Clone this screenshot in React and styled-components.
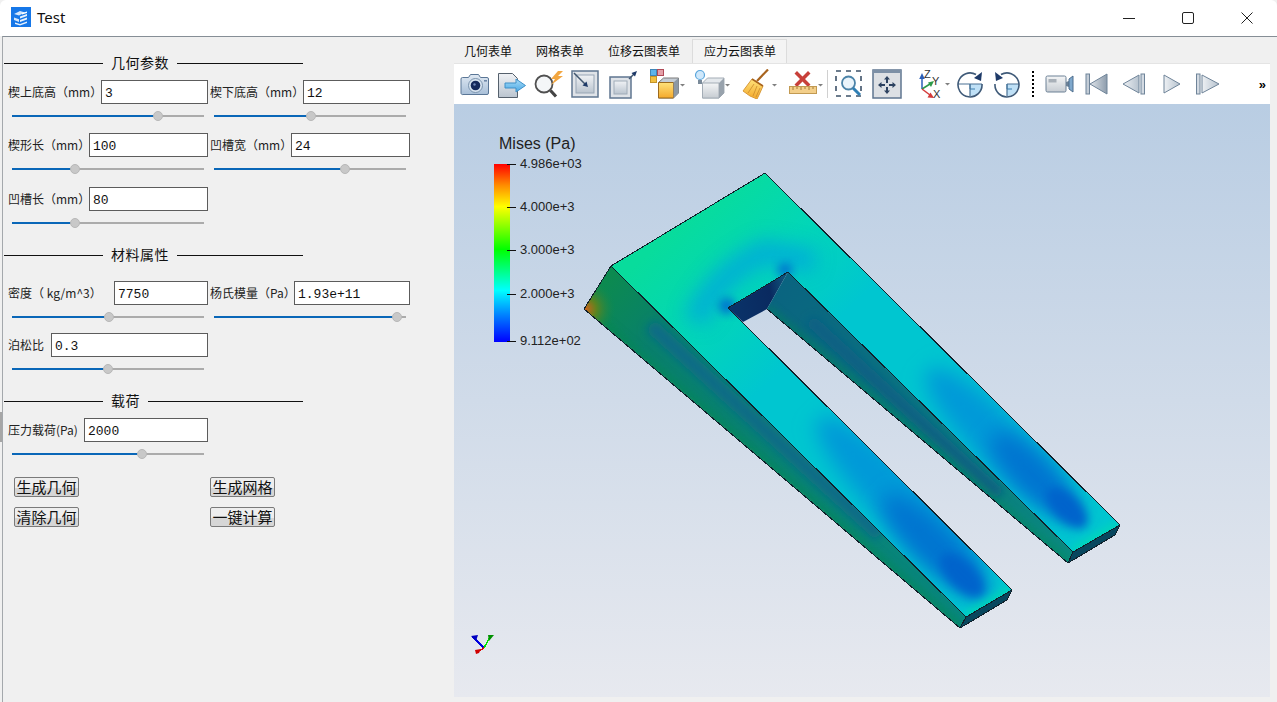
import React from "react";
import styled, { createGlobalStyle } from "styled-components";

const GlobalStyle = createGlobalStyle`
  html, body {
    margin: 0;
    padding: 0;
    background: #f0f0f0;
    overflow: hidden;
  }
  * {
    box-sizing: border-box;
  }
`;

const cjk = `"Noto Sans CJK SC", "Noto Sans", sans-serif`;

const Win = styled.div`
  position: relative;
  width: 1277px;
  height: 702px;
  display: flex;
  flex-direction: column;
  overflow: hidden;
  background: #f0f0f0;
`;

const EdgeMark = styled.div`
  position: absolute;
  left: 0;
  top: 412px;
  width: 2px;
  height: 30px;
  background: #a6a6a6;
`;

const TitleBar = styled.div`
  height: 36px;
  flex: none;
  display: flex;
  align-items: center;
  background: #fff;
  border-top-left-radius: 6px;
  border-top-right-radius: 6px;
  padding: 0 1px 0 11px;
`;

const TitleText = styled.span`
  font: 15px "Noto Sans", sans-serif;
  color: #111;
  margin-left: 6px;
  margin-top: -2px;
  flex: 1;
`;

const AppIconBox = styled.svg`
  display: block;
  margin-top: -2px;
`;

const WinButton = styled.div`
  width: 59px;
  height: 36px;
  display: flex;
  align-items: center;
  justify-content: center;
  margin-top: -1px;
`;

const Main = styled.div`
  flex: 1;
  min-height: 0;
  display: flex;
  margin-left: 2px;
  border-top: 1px solid #868e96;
  border-left: 1px solid #a4a8ac;
`;

const Panel = styled.div`
  width: 451px;
  flex: none;
  padding: 15px 0 0 1px;
`;

const SectionHead = styled.div`
  width: 299px;
  height: 20px;
  display: flex;
  align-items: center;
  gap: 8px;
  margin-bottom: ${(p) => p.$after}px;
  font: 14px/18px ${cjk};
  letter-spacing: 0.5px;
  color: #111;
  &::before,
  &::after {
    content: "";
    height: 1px;
    background: #111;
    position: relative;
    top: 1px;
  }
  &::before {
    width: 99px;
    flex: none;
  }
  &::after {
    flex: 1;
  }
`;

const Rows = styled.div`
  display: grid;
  grid-template-columns: 200px 200px;
  column-gap: 2px;
  padding-left: 4px;
  row-gap: ${(p) => p.$gap}px;
  margin-bottom: 16px;
`;

const Field = styled.div`
  display: flex;
  flex-direction: column;
  margin-top: ${(p) => p.$mt || 0}px;
`;

const FieldTop = styled.div`
  display: flex;
  align-items: center;
  height: 24px;
`;

const Label = styled.label`
  flex: none;
  width: ${(p) => p.$w}px;
  font: 12px ${cjk};
  color: #222;
  white-space: nowrap;
  position: relative;
  top: -1px;
`;

const Input = styled.input`
  flex: 1;
  min-width: 0;
  height: 24px;
  border: 1px solid #5c5c5c;
  background: #fff;
  padding: 2px 3px 0;
  font: 13px "Liberation Mono", monospace;
  color: #111;
  outline: none;
  border-radius: 0;
`;

const Track = styled.div`
  position: relative;
  height: 2px;
  width: 192px;
  margin: 11px 0 4px 4px;
  background: #ababab;
`;

const TrackFill = styled.div`
  height: 100%;
  width: ${(p) => p.$v}%;
  background: #0a67b8;
`;

const Thumb = styled.div`
  position: absolute;
  top: -4px;
  left: ${(p) => p.$v}%;
  width: 10px;
  height: 10px;
  margin-left: -5px;
  border-radius: 50%;
  background: #c8c8c8;
  border: 1px solid #b8b8b8;
`;

const Actions = styled.div`
  display: grid;
  grid-template-columns: 196px 64px;
  row-gap: 10px;
  padding-left: 10px;
  margin-top: 18px;
`;

const Action = styled.button`
  width: 65px;
  height: 20px;
  padding: 0;
  border: 1px solid #7a7a7a;
  border-radius: 2px;
  background: linear-gradient(#eeeeee 55%, #d6d6d6 56%);
  font: 15px/18px ${cjk};
  color: #111;
`;

const Right = styled.div`
  width: 816px;
  flex: none;
  display: flex;
  flex-direction: column;
`;

const Tabs = styled.div`
  height: 26px;
  flex: none;
  display: flex;
  align-items: stretch;
  padding-top: 2px;
`;

const Tab = styled.div`
  width: ${(p) => p.$w}px;
  padding-left: ${(p) => p.$pl}px;
  font: 12px/22px ${cjk};
  color: #111;
  background: ${(p) => (p.$active ? "#f4f4f4" : "transparent")};
  border: 1px solid ${(p) => (p.$active ? "#dcdcdc" : "transparent")};
  border-bottom: none;
`;

const Toolbar = styled.div`
  height: 41px;
  flex: none;
  display: flex;
  align-items: center;
  background: #fff;
  padding-left: 2px;
  border-top: 1px solid #e4e4e4;
`;

const ToolButton = styled.div`
  width: ${(p) => p.$w}px;
  height: 36px;
  flex: none;
  display: flex;
  align-items: center;
  justify-content: center;
  margin-left: ${(p) => p.$ml || 0}px;
`;

const Separator = styled.div`
  width: 1px;
  height: 28px;
  flex: none;
  background: #d0d0d0;
  margin: 0 2px;
`;

const DottedSep = styled.div`
  width: 2px;
  height: 27px;
  flex: none;
  margin: 0 7px 0 6px;
  background: repeating-linear-gradient(#000 0 2px, transparent 2px 4px);
`;

const More = styled.div`
  margin-left: auto;
  margin-right: 4px;
  font: bold 13px "Liberation Sans", sans-serif;
  color: #000;
`;

const Viewport = styled.div`
  position: relative;
  height: 593px;
  flex: none;
  background: linear-gradient(#b9cde3, #e7e9ef);
`;

const Scene = styled.svg`
  display: block;
  width: 816px;
  height: 593px;
`;

const Legend = styled.div`
  position: absolute;
  left: 40px;
  top: 30px;
  font-family: "Liberation Sans", Arial, sans-serif;
  color: #222;
`;

const LegendTitle = styled.div`
  font-size: 16px;
  line-height: 20px;
  margin-left: 5px;
  margin-bottom: 10px;
`;

const LegendBody = styled.div`
  display: flex;
  align-items: flex-start;
`;

const ColorBar = styled.div`
  width: 16px;
  height: 178px;
  background: linear-gradient(
    #ff0000 0%,
    #ff8c00 12%,
    #ffff00 24%,
    #00ff00 48%,
    #00ffff 71%,
    #0080ff 85%,
    #0000ff 100%
  );
`;

const Ticks = styled.div`
  display: flex;
  flex-direction: column;
  margin-left: -3px;
`;

const TickRow = styled.div`
  height: ${(p) => p.$h}px;
  display: flex;
  align-items: flex-start;
  font-size: 13px;
  line-height: 14px;
  white-space: nowrap;
  &::before {
    content: "";
    width: 9px;
    height: 1px;
    background: #111;
    margin-right: 4px;
    flex: none;
  }
  & > span {
    margin-top: -7px;
  }
`;

const fields = {
  geo: [
    [
      { label: "楔上底高（mm）", w: 93, value: "3", v: 76 },
      { label: "楔下底高（mm）", w: 93, value: "12", v: 50.5 },
    ],
    [
      { label: "楔形长（mm）", w: 81, value: "100", v: 33 },
      { label: "凹槽宽（mm）", w: 81, value: "24", v: 68 },
    ],
    [{ label: "凹槽长（mm）", w: 81, value: "80", v: 33, mt: 1 }],
  ],
  mat: [
    [
      { label: "密度（ kg/m^3）", w: 106, value: "7750", v: 50.5 },
      { label: "杨氏模量（Pa）", w: 84, value: "1.93e+11", v: 95.5 },
    ],
    [{ label: "泊松比", w: 43, value: "0.3", v: 50 }],
  ],
  load: [[{ label: "压力载荷(Pa)", w: 76, value: "2000", v: 67.5 }]],
};

function ParamField({ label, w, value, v, mt }) {
  return (
    <Field $mt={mt}>
      <FieldTop>
        <Label $w={w}>{label}</Label>
        <Input defaultValue={value} />
      </FieldTop>
      <Track>
        <TrackFill $v={v} />
        <Thumb $v={v} />
      </Track>
    </Field>
  );
}

function FieldGroup({ rows, gap }) {
  return (
    <Rows $gap={gap}>
      {rows.map((row, i) => (
        <React.Fragment key={i}>
          <ParamField {...row[0]} />
          {row[1] ? <ParamField {...row[1]} /> : <div />}
        </React.Fragment>
      ))}
    </Rows>
  );
}

const Caret = ({ x, y = 15 }) => <path d={`M${x} ${y}h5l-2.5 2.5z`} fill="#808080" />;

const frame = "#5f7690";

function AppIcon() {
  return (
    <AppIconBox width="20" height="20" viewBox="0 0 20 20">
      <rect width="20" height="20" fill="#1677e8" />
      <path d="M3 7l6-3 5 1.5-6 3zM3 10.5l5 1.8V15L3 13z" fill="#d4e6fb" />
      <path d="M9 9.5l7-2.500v2l-7 2.500zM9 13l7-2.500v2L9 15zM4 15.5l5 1.500 7-2.500v1.500L9 18.500l-5-1.500z" fill="#fff" opacity=".9" />
      <path d="M11 6l5-1.500V6l-5 1.500z" fill="#fff" />
    </AppIconBox>
  );
}

const icons = {
  camera: (
    <svg width="30" height="26" viewBox="0 0 30 26">
      <path d="M2.5 6.5h6l2-3h8l2 3h6.500a1.500 1.500 0 0 1 1.500 1.500v14a1.500 1.500 0 0 1-1.500 1.500h-24A1.500 1.500 0 0 1 1 22V8a1.500 1.500 0 0 1 1.500-1.500z" fill="url(#icoBlue)" stroke="#5a7696" />
      <circle cx="15.5" cy="14.5" r="7" fill="#d8e4f0" stroke="#7a93ad" />
      <circle cx="15.5" cy="14.5" r="4.8" fill="#14295c" />
      <circle cx="14.5" cy="13.5" r="1.2" fill="#6f88b8" />
      <rect x="24" y="9" width="3" height="1.6" fill="#6f88a8" />
    </svg>
  ),
  exportFile: (
    <svg width="30" height="28" viewBox="0 0 30 28">
      <path d="M2.5 3.5h14l5 5v19h-19z" fill="url(#icoPanel)" stroke="#55606c" />
      <path d="M9 13h11V9l9.500 6.500L20 22v-4H9z" fill="url(#icoArrow)" stroke="#3f90c8" strokeLinejoin="round" />
    </svg>
  ),
  zoomBolt: (
    <svg width="30" height="28" viewBox="0 0 30 28">
      <circle cx="11" cy="14" r="8.5" fill="#f4f6f8" stroke="#505050" strokeWidth="1.8" />
      <path d="M17.5 20.5L23 26.5" stroke="#444" strokeWidth="3.2" />
      <path d="M25 1l-7 8h4l-4 6L30 6h-5l5-5z" fill="#f2a640" />
    </svg>
  ),
  frameIn: (
    <svg width="28" height="28" viewBox="0 0 28 28">
      <rect x="1" y="1" width="26" height="26" fill="#dfe3e8" stroke={frame} strokeWidth="1.5" />
      <rect x="5" y="5" width="18" height="18" fill="url(#icoPanel)" stroke="#98a6b5" />
      <path d="M3 3L15 15" stroke="#40566f" strokeWidth="1.5" />
      <path d="M17 17l-5.500-1.500 4-4z" fill="#1e3a68" />
    </svg>
  ),
  frameOut: (
    <svg width="30" height="30" viewBox="0 0 30 30">
      <rect x="2" y="8" width="21" height="21" fill="#dfe3e8" stroke={frame} strokeWidth="1.5" />
      <rect x="6" y="12" width="13" height="13" fill="url(#icoPanel)" stroke="#a0acb8" />
      <path d="M21 10L27 4" stroke="#40566f" strokeWidth="1.5" />
      <path d="M29 2l-2 5.500-3.500-3.500z" fill="#1e3a68" />
    </svg>
  ),
  cubeColors: (
    <svg width="42" height="30" viewBox="0 0 42 30">
      <rect x="7.5" y=".5" width="6" height="6" fill="#5db4ea" stroke="#3f86b8" />
      <rect x="14.5" y=".5" width="6" height="6" fill="#e4a0a8" stroke="#b04a58" />
      <rect x="7.5" y="7.5" width="6" height="6" fill="#f2c040" stroke="#c49428" />
      <path d="M15.5 13.5l5-4.500h15v15l-5 5h-15z" fill="#c4ccd4" stroke="#7a7a7a" />
      <path d="M15.5 13.5h15v15.500h-15z" fill="url(#icoYellow)" stroke="#9c6a1c" />
      <path d="M30.5 13.5l5-4.500v15l-5 5z" fill="#8c98a4" />
      <Caret x={37} y={15} />
    </svg>
  ),
  cubeBulb: (
    <svg width="44" height="30" viewBox="0 0 44 30">
      <circle cx="12" cy="6" r="4.5" fill="#cfe8fb" stroke="#5aa6dc" strokeWidth="1.2" />
      <path d="M10 11h4v4h-4z" fill="#7a8a99" />
      <path d="M14.5 14l5-5h16.500v15l-5 5H14.500z" fill="#e4e8ec" stroke="#a4adb6" />
      <path d="M14.5 14H31v15H14.500z" fill="url(#icoGrey)" stroke="#a4adb6" />
      <path d="M31 14l5-5v15l-5 5z" fill="#98a2ac" />
      <Caret x={37} y={15} />
    </svg>
  ),
  broom: (
    <svg width="44" height="30" viewBox="0 0 44 30">
      <path d="M33 0.5L22 12" stroke="#a8641e" strokeWidth="2.2" />
      <path d="M17 10L28 17L24 26L22 30L15 27L8 22z" fill="url(#icoYellow)" stroke="#d89a3a" />
      <path d="M17 10L28 17" stroke="#a8641e" strokeWidth="1.6" />
      <path d="M19 15L13 24M22 17L18 27M25 19L21 28" stroke="#c98a2c" strokeWidth=".8" />
      <Caret x={37} y={15} />
    </svg>
  ),
  ruler: (
    <svg width="44" height="30" viewBox="0 0 44 30">
      <path d="M16 2l5.500 5.500L27 2l2.500 2.500L24 10l5.500 5.500L27 18l-5.500-5.500L16 18l-2.500-2.500L19 10l-5.500-5.500z" fill="#c8403a" />
      <rect x="8.5" y="17.5" width="27" height="7" fill="#f3cf8a" stroke="#c29a52" />
      <path d="M12 18v3M16 18v2M20 18v3M24 18v2M28 18v3M32 18v2" stroke="#a67c34" />
      <Caret x={37} y={15} />
    </svg>
  ),
  zoomBox: (
    <svg width="28" height="28" viewBox="0 0 28 28">
      <rect x="1" y="1" width="25" height="25" fill="none" stroke="#3d5168" strokeWidth="1.6" strokeDasharray="5 5" />
      <circle cx="13.5" cy="13" r="6.5" fill="#eaf4fb" stroke="#4b83a8" strokeWidth="1.8" />
      <path d="M18 18l7 7" stroke="#2f7fb4" strokeWidth="3" />
    </svg>
  ),
  move: (
    <svg width="30" height="30" viewBox="0 0 30 30">
      <rect x="1" y="1" width="28" height="28" fill="#dde0e4" stroke={frame} strokeWidth="1.5" />
      <rect x="1" y="1" width="28" height="3" fill="#7d90a6" />
      <path d="M15 7l3 3.500h-2V14h-2v-3.500h-2zM15 25l-3-3.500h2V18h2v3.500h2zM6 16l3.500-3v2H13v2H9.500v2zM24 16l-3.500-3v2H17v2h3.500v2z" fill="#2d4260" />
    </svg>
  ),
  axes: (
    <svg width="38" height="30" viewBox="0 0 38 30">
      <path d="M9 20V8" stroke="#2c5fb8" strokeWidth="1.5" />
      <path d="M9 4l2.800 6H6.200z" fill="#2c5fb8" />
      <path d="M9 20l8-5" stroke="#2d9a4a" strokeWidth="1.5" />
      <path d="M21 12l-3 6-3-4.500z" fill="#2d9a4a" />
      <path d="M9 20l8 6" stroke="#d43a3a" strokeWidth="1.5" />
      <path d="M21 29l-6.500-.5 3-5z" fill="#d43a3a" />
      <text x="11" y="9" fontFamily="Liberation Sans" fontSize="11" fill="#333">Z</text>
      <text x="19" y="16" fontFamily="Liberation Sans" fontSize="11" fill="#333">Y</text>
      <text x="20" y="29" fontFamily="Liberation Sans" fontSize="11" fill="#333">X</text>
      <Caret x={32} y={14} />
    </svg>
  ),
  rotateCw: (
    <svg width="28" height="28" viewBox="0 0 28 28">
      <path d="M14 14h12a12 12 0 0 1-12 12z" fill="#bfe0f6" />
      <path d="M14 14v5h5" fill="none" stroke="#3a7fb0" />
      <path d="M2 14h24M14 14v12" stroke="#4a7194" strokeWidth="1.2" />
      <path d="M20 4.5A12 12 0 1 0 26 14" fill="none" stroke="#3f5a78" strokeWidth="1.6" />
      <path d="M26 2l-1 9-7-3z" fill="#1e3a68" />
    </svg>
  ),
  rotateCcw: (
    <svg width="28" height="28" viewBox="0 0 28 28">
      <path d="M14 14h12a12 12 0 0 1-12 12z" fill="#bfe0f6" />
      <path d="M14 14v5h5" fill="none" stroke="#3a7fb0" />
      <path d="M14 14h12M14 14v12" stroke="#4a7194" strokeWidth="1.2" />
      <path d="M8 4.5A12 12 0 1 1 2 14" fill="none" stroke="#3f5a78" strokeWidth="1.6" />
      <path d="M2 2l1 9 7-3z" fill="#1e3a68" />
    </svg>
  ),
  video: (
    <svg width="30" height="20" viewBox="0 0 30 20">
      <rect x="1" y="2" width="20" height="16" rx="1.5" fill="url(#icoGrey)" stroke="#6c8196" />
      <rect x="3.5" y="5" width="8" height="3.5" fill="#a8b0b8" />
      <path d="M21 8l3-1v6l-3-1z" fill="#6c8196" />
      <path d="M24 5l4-3v16l-4-3z" fill="#7fa8cc" stroke="#4f6f8e" />
    </svg>
  ),
  first: (
    <svg width="24" height="24" viewBox="0 0 24 24">
      <rect x="1" y="2" width="3.5" height="20" fill="#c3ccd6" stroke="#6f8499" />
      <path d="M22 2v20L5 12z" fill="url(#icoTri)" stroke="#6f8499" />
    </svg>
  ),
  prev: (
    <svg width="26" height="24" viewBox="0 0 26 24">
      <path d="M18 3v18L2 12z" fill="url(#icoTriL)" stroke="#6f8499" />
      <rect x="20" y="2" width="3.5" height="20" fill="#d3dae2" stroke="#6f8499" />
    </svg>
  ),
  next: (
    <svg width="20" height="24" viewBox="0 0 20 24">
      <path d="M2 3v18l16-9z" fill="url(#icoTriL)" stroke="#6f8499" />
    </svg>
  ),
  last: (
    <svg width="26" height="24" viewBox="0 0 26 24">
      <rect x="1.5" y="2" width="3.5" height="20" fill="#d3dae2" stroke="#6f8499" />
      <path d="M7 3v18l17-9z" fill="url(#icoTriL)" stroke="#6f8499" />
    </svg>
  ),
};

const tools = [
  ["camera", 37],
  ["exportFile", 36],
  ["zoomBolt", 37],
  ["frameIn", 38],
  ["frameOut", 38],
  ["cubeColors", 44],
  ["cubeBulb", 47],
  ["broom", 47],
  ["ruler", 45],
  "sep",
  ["zoomBox", 38],
  ["move", 38],
  ["axes", 39, 6],
  ["rotateCw", 37],
  ["rotateCcw", 38],
  "dots",
  ["video", 38],
  ["first", 36],
  ["prev", 38],
  ["next", 37],
  ["last", 36],
];

// model outline, page coordinates
const topFace = "765,173 1120,525 1073,552 788,272 728,308 1012,590 966,617 611,266";
const outerSide = "611,266 966,617 960,628 584,309";
const innerWall = "788,272 1073,552 1068,563 767,309";
const notch = "728,308 788,272 767,309 743,322";
const endLeft = "966,617 1012,590 1007,600 960,628";
const endRight = "1073,552 1120,525 1115,535 1068,563";

function Model() {
  return (
    <Scene viewBox="454 104 816 593">
      <defs>
        <linearGradient id="icoBlue" x1="0" y1="0" x2="0" y2="1">
          <stop offset="0" stopColor="#dfe8f2" />
          <stop offset="1" stopColor="#a8bfd8" />
        </linearGradient>
        <linearGradient id="icoGrey" x1="0" y1="0" x2="0" y2="1">
          <stop offset="0" stopColor="#f4f5f6" />
          <stop offset="1" stopColor="#c6ccd2" />
        </linearGradient>
        <linearGradient id="icoPanel" x1="0" y1="0" x2="0" y2="1">
          <stop offset="0" stopColor="#f0f2f5" />
          <stop offset="1" stopColor="#bac4cf" />
        </linearGradient>
        <linearGradient id="icoArrow" x1="0" y1="0" x2="0" y2="1">
          <stop offset="0" stopColor="#a8dcf8" />
          <stop offset="1" stopColor="#4aa8e4" />
        </linearGradient>
        <linearGradient id="icoYellow" x1="0" y1="0" x2="0" y2="1">
          <stop offset="0" stopColor="#ffe27a" />
          <stop offset="1" stopColor="#f4a92c" />
        </linearGradient>
        <linearGradient id="icoTri" x1="0" y1="0" x2="1" y2="0">
          <stop offset="0" stopColor="#e0e5ea" />
          <stop offset="1" stopColor="#8d9cac" />
        </linearGradient>
        <linearGradient id="icoTriL" x1="0" y1="0" x2="1" y2="0">
          <stop offset="0" stopColor="#eef1f4" />
          <stop offset="1" stopColor="#b6c2ce" />
        </linearGradient>

        <linearGradient id="topBase" gradientUnits="userSpaceOnUse" x1="690" y1="215" x2="810" y2="345">
          <stop offset="0" stopColor="#08dc9c" />
          <stop offset="0.5" stopColor="#02d6b8" />
          <stop offset="1" stopColor="#00c6d0" />
        </linearGradient>
        <linearGradient id="sideBase" gradientUnits="userSpaceOnUse" x1="590" y1="300" x2="960" y2="620">
          <stop offset="0" stopColor="#0c8a50" />
          <stop offset="0.15" stopColor="#08806c" />
          <stop offset="1" stopColor="#08867e" />
        </linearGradient>
        <linearGradient id="wallBase" gradientUnits="userSpaceOnUse" x1="775" y1="290" x2="1070" y2="560">
          <stop offset="0" stopColor="#0a6480" />
          <stop offset="1" stopColor="#0a8a80" />
        </linearGradient>
        <linearGradient id="notchBase" gradientUnits="userSpaceOnUse" x1="735" y1="300" x2="785" y2="290">
          <stop offset="0" stopColor="#0a3268" />
          <stop offset="0.7" stopColor="#0a2a60" />
          <stop offset="1" stopColor="#0f5078" />
        </linearGradient>
        <radialGradient id="tipHot" gradientUnits="userSpaceOnUse" cx="586" cy="309" r="30">
          <stop offset="0" stopColor="#c8641a" />
          <stop offset="0.35" stopColor="#5c8420" />
          <stop offset="1" stopColor="#0c8a50" stopOpacity="0" />
        </radialGradient>
        <filter id="blurL" x="-50%" y="-50%" width="200%" height="200%">
          <feGaussianBlur stdDeviation="10" />
        </filter>
        <filter id="blurM" x="-50%" y="-50%" width="200%" height="200%">
          <feGaussianBlur stdDeviation="5" />
        </filter>
        <clipPath id="clipTop">
          <polygon points={topFace} />
        </clipPath>
        <clipPath id="clipSide">
          <polygon points={outerSide} />
        </clipPath>
        <clipPath id="clipWall">
          <polygon points={innerWall} />
        </clipPath>
      </defs>

      <polygon points={notch} fill="url(#notchBase)" />
      <polygon points={innerWall} fill="url(#wallBase)" />
      <g clipPath="url(#clipWall)" fill="none">
        <path d="M810 320L1000 495" stroke="#0a5f84" strokeWidth="12" filter="url(#blurM)" />
        <path d="M767 309L1068 563" stroke="#0a8a50" strokeWidth="5" filter="url(#blurM)" opacity=".8" />
      </g>

      <polygon points={outerSide} fill="url(#sideBase)" />
      <g clipPath="url(#clipSide)" fill="none">
        <path d="M650 325L880 535" stroke="#0a6a88" strokeWidth="14" filter="url(#blurM)" />
        <path d="M584 309L960 628" stroke="#0a8a4c" strokeWidth="6" filter="url(#blurM)" opacity=".8" />
        <circle cx="586" cy="309" r="30" fill="url(#tipHot)" />
      </g>

      <polygon points={endLeft} fill="#08475e" />
      <polygon points={endRight} fill="#08475e" />

      <polygon points={topFace} fill="url(#topBase)" />
      <g clipPath="url(#clipTop)">
        <path d="M695 322Q715 275 765 252L815 262" fill="none" stroke="#00a8dc" strokeWidth="24" filter="url(#blurL)" opacity=".85" />
        <circle cx="785" cy="270" r="7" fill="#0070d0" filter="url(#blurM)" />
        <circle cx="727" cy="306" r="8" fill="#0070d0" filter="url(#blurM)" />
        <ellipse cx="900" cy="500" rx="115" ry="27" transform="rotate(44.7 900 500)" fill="#009ad8" filter="url(#blurL)" />
        <ellipse cx="935" cy="547" rx="72" ry="21" transform="rotate(44.7 935 547)" fill="#0074d0" filter="url(#blurL)" />
        <ellipse cx="962" cy="575" rx="28" ry="13" transform="rotate(44.7 962 575)" fill="#0064cc" filter="url(#blurM)" />
        <ellipse cx="995" cy="437" rx="95" ry="25" transform="rotate(44.7 995 437)" fill="#009ad8" filter="url(#blurL)" />
        <ellipse cx="1035" cy="477" rx="60" ry="20" transform="rotate(44.7 1035 477)" fill="#0074d0" filter="url(#blurL)" />
        <ellipse cx="1067" cy="508" rx="26" ry="13" transform="rotate(44.7 1067 508)" fill="#0064cc" filter="url(#blurM)" />
        <path d="M966 617L1012 590" stroke="#00dcb0" strokeWidth="7" filter="url(#blurM)" />
        <path d="M1073 552L1120 525" stroke="#00dcb0" strokeWidth="7" filter="url(#blurM)" />
      </g>

      <g fill="none" stroke="#10202a" strokeWidth="1" shapeRendering="crispEdges">
        <path d="M611 266L765 173L1120 525" />
        <path d="M611 266L966 617L1012 590L728 308L788 272L1073 552L1120 525" />
        <path d="M1073 552L1068 563M966 617L960 628" />
        <path d="M611 266L584 309L960 628L1007 600L1012 590" />
        <path d="M767 309L1068 563L1115 535L1120 525" />
      </g>

      <g shapeRendering="crispEdges" fill="none" strokeWidth="1.5">
        <path d="M484 648L473 637" stroke="#0000e0" />
        <path d="M484 648L491 635" stroke="#00e000" />
        <path d="M484 648L477 652" stroke="#e00000" />
      </g>
      <path d="M471 636l7 -1l-2 6z" fill="#0000c0" />
      <path d="M494 635l-6 0l1 6z" fill="#009000" />
      <path d="M476 654l-1 -4l6 -1l-2 4z" fill="#d00000" />
    </Scene>
  );
}

export default function App() {
  return (
    <>
      <GlobalStyle />
      <Win>
        <TitleBar>
          <AppIcon />
          <TitleText>Test</TitleText>
          <WinButton>
            <svg width="12" height="12" viewBox="0 0 12 12">
              <path d="M0 6.5h12" stroke="#222" strokeWidth="1" />
            </svg>
          </WinButton>
          <WinButton>
            <svg width="12" height="12" viewBox="0 0 12 12">
              <rect x=".5" y=".5" width="11" height="11" rx="1.5" fill="none" stroke="#222" />
            </svg>
          </WinButton>
          <WinButton>
            <svg width="12" height="12" viewBox="0 0 12 12">
              <path d="M.5 .5l11 11M11.5 .5l-11 11" stroke="#222" />
            </svg>
          </WinButton>
        </TitleBar>
        <Main>
          <Panel>
            <SectionHead $after={8}>几何参数</SectionHead>
            <FieldGroup rows={fields.geo} gap={12} />
            <SectionHead $after={17}>材料属性</SectionHead>
            <FieldGroup rows={fields.mat} gap={11} />
            <SectionHead $after={8}>载荷</SectionHead>
            <FieldGroup rows={fields.load} gap={0} />
            <Actions>
              <Action>生成几何</Action>
              <Action>生成网格</Action>
              <Action>清除几何</Action>
              <Action>一键计算</Action>
            </Actions>
          </Panel>
          <Right>
            <Tabs>
              <Tab $w={72} $pl={9}>几何表单</Tab>
              <Tab $w={72} $pl={9}>网格表单</Tab>
              <Tab $w={94} $pl={9}>位移云图表单</Tab>
              <Tab $w={95} $pl={11} $active>应力云图表单</Tab>
            </Tabs>
            <Toolbar>
              {tools.map((t, i) => {
                if (t === "sep") return <Separator key={i} />;
                if (t === "dots") return <DottedSep key={i} />;
                return (
                  <ToolButton key={i} $w={t[1]} $ml={t[2]}>
                    {icons[t[0]]}
                  </ToolButton>
                );
              })}
              <More>»</More>
            </Toolbar>
            <Viewport>
              <Model />
              <Legend>
                <LegendTitle>Mises (Pa)</LegendTitle>
                <LegendBody>
                  <ColorBar />
                  <Ticks>
                    <TickRow $h={43}><span>4.986e+03</span></TickRow>
                    <TickRow $h={43}><span>4.000e+3</span></TickRow>
                    <TickRow $h={44}><span>3.000e+3</span></TickRow>
                    <TickRow $h={47}><span>2.000e+3</span></TickRow>
                    <TickRow $h={1}><span>9.112e+02</span></TickRow>
                  </Ticks>
                </LegendBody>
              </Legend>
            </Viewport>
          </Right>
        </Main>
        <EdgeMark />
      </Win>
    </>
  );
}
